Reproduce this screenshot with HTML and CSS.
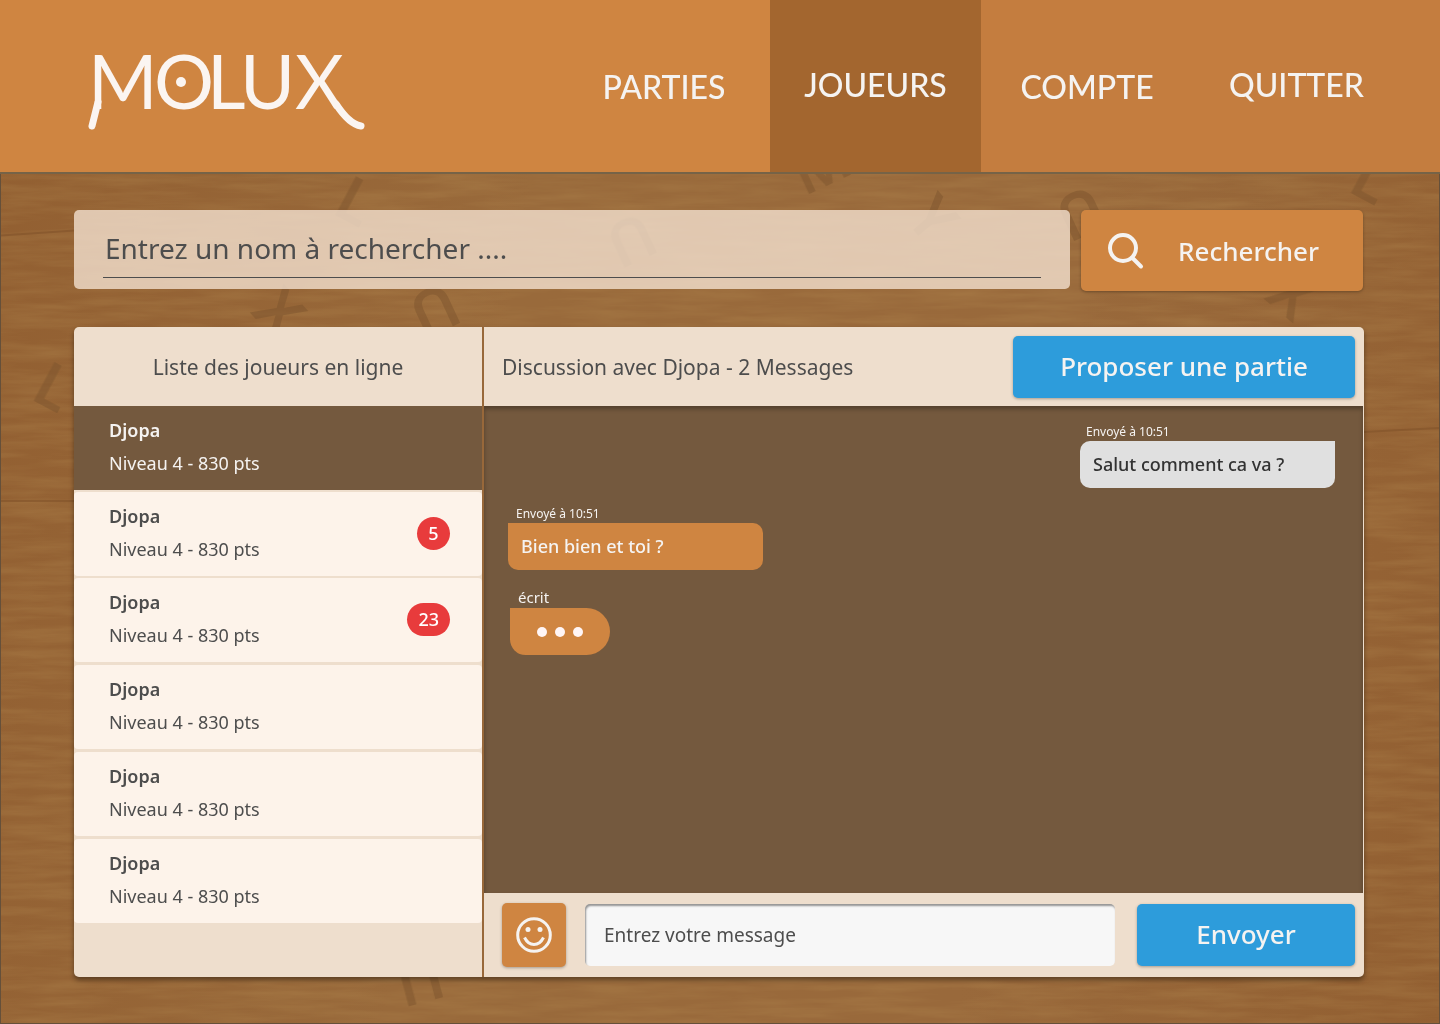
FILE: index.html
```html
<!DOCTYPE html>
<html lang="fr">
<head>
<meta charset="utf-8">
<meta name="viewport" content="width=device-width, initial-scale=1">
<title>Molux - Joueurs</title>
<link rel="stylesheet" href="styles.css">
</head>
<body>
<svg class="wood" aria-hidden="true" width="100%" height="100%" viewBox="0 0 1440 1024" preserveAspectRatio="xMidYMid slice">
  <defs>
    <filter id="grain" x="0" y="0" width="100%" height="100%">
      <feTurbulence type="fractalNoise" baseFrequency="0.012 0.12" numOctaves="4" seed="8"/>
      <feColorMatrix values="0 0 0 0 .45  0 0 0 0 .25  0 0 0 0 .08  .6 0 0 0 -.2"/>
    </filter>
  </defs>
  <rect width="1440" height="1024" filter="url(#grain)"/>
  <path class="seam" d="M0 501H74M0 235L74 230M1364 432L1440 428"/>
  <g class="carved">
    <text transform="translate(330 212) rotate(28)">L</text>
    <text transform="translate(28 398) rotate(28)">L</text>
    <text transform="translate(1347 190) rotate(28)">L</text>
    <text transform="translate(804 196) rotate(-25)">M</text>
    <text transform="translate(904 218) rotate(50)">Y</text>
    <text transform="translate(249 312) rotate(48)">X</text>
    <text transform="translate(425 290) rotate(155)" text-anchor="middle">U</text>
    <text transform="translate(1072 193) rotate(155)" text-anchor="middle">U</text>
    <text transform="translate(622 220) rotate(155)" text-anchor="middle">U</text>
    <text transform="translate(414 960) rotate(165)" text-anchor="middle">U</text>
    <text transform="translate(1264 298) rotate(40)">X</text>
  </g>
</svg>

<header class="topbar">
  <a class="brand" href="#" aria-label="Molux">
    <svg class="logo" width="280" height="80" viewBox="0 0 280 80" aria-hidden="true">
      <text x="2 68 121 154 209" y="57">MOLUX</text>
      <path d="M12 50L6 74M250 52Q263 72 275 74"/>
      <circle cx="95" cy="30" r="5"/>
    </svg>
  </a>
  <nav class="menu" aria-label="Navigation principale">
    <a class="menu-link" href="#">PARTIES</a>
    <a class="menu-link current" href="#" aria-current="page">JOUEURS</a>
    <a class="menu-link account" href="#">COMPTE</a>
    <a class="menu-link quit" href="#">QUITTER</a>
  </nav>
</header>

<main class="page">
  <form class="search">
    <div class="search-box"><input class="search-input" type="text" aria-label="Nom à rechercher" placeholder="Entrez un nom à rechercher ...."></div>
    <button class="button search-button" type="button">
      <svg width="38" height="38" viewBox="0 0 38 38" aria-hidden="true"><circle cx="16" cy="16" r="13"/><path d="M25.500 26L34 34.500"/></svg>
      <span>Rechercher</span>
    </button>
  </form>

  <div class="panel">
    <section class="players">
      <h2 class="bar players-title">Liste des joueurs en ligne</h2>
      <ul class="list">
        <li><a class="player selected" href="#"><span class="who"><b>Djopa</b><span>Niveau 4 - 830 pts</span></span></a></li>
        <li><a class="player" href="#"><span class="who"><b>Djopa</b><span>Niveau 4 - 830 pts</span></span><span class="count">5</span></a></li>
        <li><a class="player" href="#"><span class="who"><b>Djopa</b><span>Niveau 4 - 830 pts</span></span><span class="count">23</span></a></li>
        <li><a class="player" href="#"><span class="who"><b>Djopa</b><span>Niveau 4 - 830 pts</span></span></a></li>
        <li><a class="player" href="#"><span class="who"><b>Djopa</b><span>Niveau 4 - 830 pts</span></span></a></li>
        <li><a class="player" href="#"><span class="who"><b>Djopa</b><span>Niveau 4 - 830 pts</span></span></a></li>
      </ul>
    </section>

    <section class="chat">
      <div class="bar chat-head">
        <h2 class="chat-title">Discussion avec Djopa - 2 Messages</h2>
        <button class="button blue invite" type="button">Proposer une partie</button>
      </div>
      <div class="messages">
        <div class="message sent"><span class="time">Envoyé à 10:51</span><p class="bubble">Salut comment ca va ?</p></div>
        <div class="message"><span class="time">Envoyé à 10:51</span><p class="bubble">Bien bien et toi ?</p></div>
        <div class="message writing"><span class="time">écrit</span><p class="bubble dots"><i></i><i></i><i></i></p></div>
      </div>
      <form class="composer">
        <button class="button smiley" type="button" aria-label="Émoticônes">
          <svg width="36" height="36" viewBox="0 0 36 36" aria-hidden="true"><circle class="ring" cx="18" cy="18" r="16.300"/><circle cx="12" cy="12.500" r="2.500"/><circle cx="24" cy="12.500" r="2.500"/><path d="M8.500 20.500Q12 27.500 18 27.500T27.500 20.500"/></svg>
        </button>
        <input class="message-input" type="text" aria-label="Message" placeholder="Entrez votre message">
        <button class="button blue send" type="button">Envoyer</button>
      </form>
    </section>
  </div>
</main>
</body>
</html>
```
FILE: styles.css
```css
* {
  box-sizing: border-box;
}

body {
  margin: 0;
  min-height: 100vh;
  position: relative;
  background: linear-gradient(100deg, #925f31, #996a3b 35%, #99693b 70%, #925f31);
  color: #4d4d4d;
  font-family: "Noto Sans", sans-serif;
  font-size: 18px;
}

a {
  color: inherit;
  text-decoration: none;
}

h2,
p,
ul {
  margin: 0;
  padding: 0;
}

.wood {
  position: absolute;
  inset: 0;
  z-index: -1;
  border: 1px solid #65503a;
}

.wood .seam {
  stroke: #82532a;
  stroke-width: 2;
  opacity: 0.6;
}

.carved {
  fill: #7c552e;
  font-family: "Liberation Sans Narrow", "Noto Sans", sans-serif;
  font-size: 62px;
  font-weight: 600;
  opacity: 0.5;
}

.topbar {
  display: flex;
  justify-content: space-between;
  height: 174px;
  background: #cf8541;
  border-bottom: 2px solid #766347;
}

.brand {
  padding: 52px 0 0 86px;
}

.logo {
  display: block;
  overflow: visible;
  fill: #fbf5f1;
}

.logo text {
  font-family: Lato, sans-serif;
  font-size: 75px;
}

.logo path {
  fill: none;
  stroke: #fbf5f1;
  stroke-width: 7;
  stroke-linecap: round;
}

.menu {
  display: flex;
  color: #f5f3f1;
  font-family: Lato, sans-serif;
  font-size: 32px;
  font-weight: 500;
}

.menu-link {
  display: flex;
  align-items: center;
  justify-content: center;
  width: 212px;
}

.current {
  width: 211px;
  padding-bottom: 4px;
  background: #a3662f;
}

.account,
.quit {
  background: #c47d3f;
}

.quit {
  width: 247px;
  padding: 0 40px 4px 0;
}

.page {
  padding: 36px 76px 47px 74px;
}

.search {
  display: flex;
  gap: 11px;
  align-items: flex-start;
  padding-right: 1px;
}

.search-box {
  flex: 1;
  height: 79px;
  padding: 8px 29px;
  border-radius: 5px;
  background: rgba(243, 224, 206, 0.8);
}

.search-input {
  width: 100%;
  height: 60px;
  padding: 0 2px;
  border: 0;
  border-bottom: 1px solid #4d4d4d;
  background: none;
  color: inherit;
  font: 28px "Noto Sans", sans-serif;
}

input::placeholder {
  color: #4d4d4d;
  opacity: 1;
}

.button {
  display: flex;
  align-items: center;
  justify-content: center;
  padding: 0 0 2px;
  border: 0;
  border-radius: 5px;
  background: #cf8541;
  box-shadow: 0 1px 3px rgba(0, 0, 0, 0.3);
  color: #f5f3f1;
  font: 500 26px "Noto Sans", sans-serif;
}

.button svg {
  fill: none;
  stroke: #f5f3f1;
  stroke-width: 4;
  stroke-linecap: round;
}

.search-button {
  width: 282px;
  height: 81px;
  gap: 33px;
  padding: 0 18px 0 0;
}

.blue {
  background: #2d9cdb;
}

.panel {
  display: flex;
  margin-top: 36px;
  min-height: 650px;
  border-radius: 5px;
  background: #eedecd;
  box-shadow: 0 3px 5px rgba(0, 0, 0, 0.4);
  overflow: hidden;
}

.players {
  width: 408px;
}

.bar {
  display: flex;
  align-items: center;
  height: 79px;
  font-size: 21px;
  font-weight: 400;
}

.players-title {
  justify-content: center;
}

.list {
  display: flex;
  flex-direction: column;
  gap: 3px;
  list-style: none;
}

.list li:nth-child(-n+2) {
  margin-bottom: -1px;
}

.player {
  display: flex;
  align-items: center;
  justify-content: space-between;
  height: 84px;
  padding: 0 32px 2px 35px;
  border-radius: 4px;
  background: #fdf3ea;
}

.selected {
  border-radius: 0;
  background: #74593e;
  color: #f5f3f1;
}

.who {
  display: flex;
  flex-direction: column;
  gap: 9px;
  padding-bottom: 1px;
  line-height: 24px;
}

.who b {
  font-weight: 600;
}

.count {
  min-width: 33px;
  padding: 0 11px;
  border-radius: 17px;
  background: #e83b3c;
  color: #ffffff;
  font-size: 18px;
  font-weight: 500;
  line-height: 33px;
  text-align: center;
}

.chat {
  flex: 1;
  display: flex;
  flex-direction: column;
  border-left: 2px solid #98683a;
}

.chat-head {
  justify-content: space-between;
  padding: 0 9px 0 18px;
}

.chat-title {
  font-size: 21px;
  font-weight: 400;
}

.invite {
  width: 342px;
  height: 62px;
}

.messages {
  flex: 1;
  display: flex;
  flex-direction: column;
  gap: 17px;
  margin-right: 1px;
  padding: 17px 28px 17px 24px;
  background: #74593e;
  box-shadow: inset 0 3px 4px rgba(0, 0, 0, 0.3);
  color: #f5f3f1;
}

.message {
  width: 255px;
}

.sent {
  align-self: flex-end;
}

.time {
  display: block;
  padding-left: 8px;
  font-size: 12px;
  line-height: 18px;
}

.bubble {
  padding: 0 13px;
  border-radius: 0 10px 10px 10px;
  background: #cf8541;
  font-size: 18px;
  font-weight: 500;
  line-height: 47px;
}

.sent .time {
  padding-left: 6px;
}

.sent .bubble {
  border-radius: 10px 0 10px 10px;
  background: #e0e0e0;
  color: #333333;
}

.writing {
  width: 100px;
  margin-left: 2px;
}

.writing .time {
  font-size: 15px;
  line-height: 21px;
}

.dots {
  display: flex;
  align-items: center;
  justify-content: center;
  gap: 8px;
  height: 47px;
  border-radius: 0 24px 24px 16px;
}

.dots i {
  width: 10px;
  height: 10px;
  border-radius: 50%;
  background: #fff5f5;
}

.composer {
  display: flex;
  align-items: center;
  height: 84px;
  padding: 0 9px 0 18px;
}

.smiley {
  width: 64px;
  height: 64px;
  padding: 0;
}

.smiley svg {
  stroke-width: 3;
  stroke-linecap: butt;
}

.smiley circle {
  fill: #f5f3f1;
  stroke: none;
}

.smiley .ring {
  fill: none;
  stroke: #f5f3f1;
}

.message-input {
  flex: 1;
  min-width: 0;
  height: 62px;
  margin: 0 22px 0 19px;
  padding: 0 19px;
  border: 0;
  border-radius: 5px;
  background: #f7f7f7;
  box-shadow: inset 1px 2px 2px rgba(0, 0, 0, 0.4);
  color: inherit;
  font: 19px "Noto Sans", sans-serif;
}

.send {
  width: 218px;
  height: 62px;
}
```
